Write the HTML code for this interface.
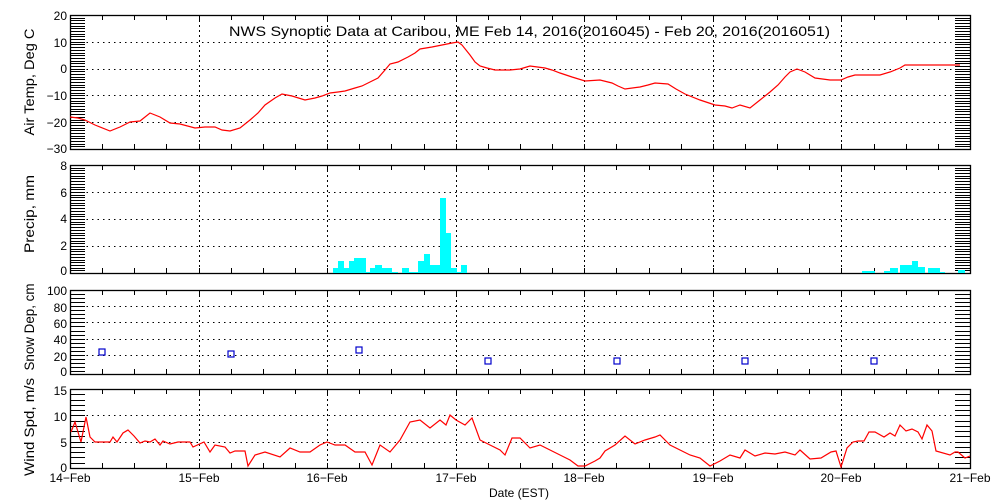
<!DOCTYPE html>
<html><head><meta charset="utf-8"><style>
html,body{margin:0;padding:0;background:#fff;width:1000px;height:500px;overflow:hidden}
svg{display:block}
text{font-family:"Liberation Sans",sans-serif;font-size:12px;fill:#000}
</style></head><body>
<svg id="s" width="1000" height="500" viewBox="0 0 1000 500" xmlns="http://www.w3.org/2000/svg">
<g id="g"></g>
<text x="229" y="36" style="font-size:14px" textLength="601" lengthAdjust="spacingAndGlyphs">NWS Synoptic Data at Caribou, ME   Feb 14, 2016(2016045) - Feb 20, 2016(2016051)</text>
<g text-anchor="end" style="font-size:13px">
<text x="67" y="20">20</text><text x="67" y="47">10</text><text x="67" y="73">0</text><text x="67" y="100">−10</text><text x="67" y="127">−20</text><text x="67" y="153">−30</text>
<text x="67" y="170">8</text><text x="67" y="197">6</text><text x="67" y="223">4</text><text x="67" y="250">2</text><text x="67" y="275">0</text>
<text x="67" y="295">100</text><text x="67" y="312">80</text><text x="67" y="328">60</text><text x="67" y="344">40</text><text x="67" y="361">20</text><text x="67" y="376">0</text>
<text x="67" y="395">15</text><text x="67" y="421">10</text><text x="67" y="447">5</text><text x="67" y="472">0</text>
</g>
<g text-anchor="middle" style="font-size:13px">
<text x="70" y="482">14−Feb</text><text x="199" y="482">15−Feb</text><text x="327" y="482">16−Feb</text><text x="456" y="482">17−Feb</text><text x="584" y="482">18−Feb</text><text x="713" y="482">19−Feb</text><text x="841" y="482">20−Feb</text><text x="970" y="482">21−Feb</text>
<text x="519" y="497" textLength="60" lengthAdjust="spacingAndGlyphs">Date (EST)</text>
<text transform="translate(34,82) rotate(-90)" textLength="107" lengthAdjust="spacingAndGlyphs" style="font-size:14px">Air Temp, Deg C</text>
<text transform="translate(34,214) rotate(-90)" textLength="78" lengthAdjust="spacingAndGlyphs" style="font-size:14px">Precip, mm</text>
<text transform="translate(34,327) rotate(-90)" textLength="87" lengthAdjust="spacingAndGlyphs" style="font-size:14px">Snow Dep, cm</text>
<text transform="translate(34,427) rotate(-90)" textLength="98" lengthAdjust="spacingAndGlyphs" style="font-size:14px">Wind Spd, m/s</text>
</g>
</svg>
<script>
var g=document.getElementById('g'),h='';
var X0=70,X1=970,dw=900/7;
var P=[[15,149,20,-30,1,10],[165,273,8,0,0.2,2],[290,374,100,-3.7,5,20],[389,468,15,0,1,5]];
function L(a,b,c,d,ex){h+='<line x1="'+a+'" y1="'+b+'" x2="'+c+'" y2="'+d+'" stroke="#000" stroke-width="1" '+(ex||'')+'/>';}
P.forEach(function(p,i){
 var t=p[0],b=p[1],vt=p[2],vb=p[3];
 function Y(v){return t+(vt-v)/(vt-vb)*(b-t);}
 for(var d=1;d<7;d++){var x=Math.round(X0+d*dw)+.5;L(x,t,x,b,'stroke-dasharray="2,3"');}
 for(var k=1;k<28;k++){var x=Math.round(X0+k*dw/4)+.5;L(x,t,x,t+5);L(x,b,x,b-5);}
 var lo=i==2?0:vb;
 for(var v=lo+p[5];v<vt-1e-6;v+=p[5]){var y=Math.round(Y(v))+.5;L(X0,y,X1,y,'stroke-dasharray="1.5,4"');}
 for(var v=lo;v<=vt+1e-6;v+=p[4]){var y=Math.round(Y(v))+.5;L(X0,y,X0+15,y);L(X1-15,y,X1,y);}
 h+='<rect x="70.5" y="'+(t+.5)+'" width="900" height="'+(b-t)+'" fill="none" stroke="#000" stroke-width="1.3"/>';
});
var bars=[[333,338,268],[338,344,261],[344,349,268],[349,354,261],[354,366,258],[366,370,272],[370,375,268],[375,382,265],[382,392,268],[392,398,272],[402,409,268],[409,418,272],[418,424,261],[424,430,254],[430,440,265],[440,446,198],[446,451,233],[451,457,268],[457,461,272],[461,467,265],
[862,875,271],[884,890,271],[890,898,268],[900,912,265],[912,918,261],[918,925,267],[928,940,268],[940,945,272],[958,965,270]];
bars.forEach(function(r){h+='<rect x="'+r[0]+'" y="'+r[2]+'" width="'+(r[1]-r[0])+'" height="'+(273-r[2])+'" fill="#00ffff"/>';});
var T=[[70,117],[78,118],[85,120],[95,125],[110,131],[120,127],[130,122],[140,121],[150,113],[160,117],[170,123],[180,124],[195,128],[205,127],[215,127],[222,130],[230,131],[240,128],[250,120],[258,113],[265,105],[275,98],[282,94],[292,96],[305,100],[315,98],[322,96],[330,93],[338,92],[345,91],[355,88],[362,86],[370,82],[378,78],[385,70],[390,64],[398,62],[408,57],[415,53],[420,49],[432,47],[442,45],[452,43],[458,42],[462,45],[466,50],[470,55],[475,62],[480,66],[487,68],[495,70],[510,70],[520,69],[530,66],[545,68],[552,70],[560,73],[572,77],[585,81],[600,80],[612,83],[618,86],[625,89],[640,87],[648,85],[655,83],[668,84],[676,89],[685,94],[700,100],[715,105],[725,106],[732,108],[740,105],[750,108],[760,100],[770,92],[778,85],[785,77],[790,72],[797,69],[805,72],[815,78],[830,80],[841,80],[848,77],[855,75],[870,75],[880,75],[890,72],[900,68],[905,65],[960,65]];
var W=[[71,432],[75,422],[81,442],[86,417],[90,437],[95,442],[110,442],[113,437],[117,442],[123,433],[128,430],[134,436],[140,443],[145,441],[150,442],[155,439],[160,445],[163,441],[170,444],[178,442],[190,442],[193,447],[204,442],[210,452],[215,445],[225,447],[230,453],[235,451],[245,451],[248,466],[255,455],[265,452],[280,457],[290,448],[300,452],[310,452],[320,445],[327,442],[335,445],[345,445],[355,452],[365,452],[372,465],[380,445],[390,452],[400,440],[410,422],[420,420],[430,428],[440,420],[446,425],[450,415],[456,420],[465,425],[472,418],[480,440],[490,445],[500,450],[505,455],[512,438],[520,438],[530,448],[540,445],[550,450],[560,455],[570,460],[578,466],[585,466],[595,461],[600,458],[605,451],[615,445],[625,436],[635,444],[645,440],[655,437],[660,435],[670,445],[680,450],[690,455],[700,458],[710,466],[720,461],[730,455],[740,458],[745,450],[755,456],[765,453],[775,454],[785,452],[795,455],[800,450],[810,459],[821,458],[831,452],[836,451],[841,467],[847,448],[853,442],[858,441],[864,441],[869,432],[875,432],[884,437],[890,433],[895,436],[900,425],[906,431],[912,429],[918,432],[922,439],[927,425],[932,431],[936,451],[950,455],[955,452],[958,452],[965,458],[970,456]];
function pl(a){h+='<polyline fill="none" stroke="#ff0000" stroke-width="1.2" points="'+a.map(function(p){return p.join(',')}).join(' ')+'"/>';}
pl(T);pl(W);
[[102,352],[231,354],[359,350],[488,361],[617,361],[745,361],[874,361]].forEach(function(p){h+='<rect x="'+(p[0]-3)+'" y="'+(p[1]-3)+'" width="6" height="6" fill="none" stroke="#0000cc" stroke-width="1.2"/>';});
g.innerHTML=h;
</script>
</body></html>
